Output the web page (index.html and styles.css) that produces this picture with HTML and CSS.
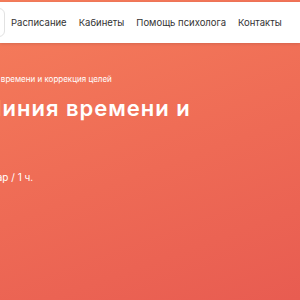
FILE: index.html
```
<!DOCTYPE html>
<html lang="ru">
<head>
    <meta charset="UTF-8">
    <title>Линия времени и коррекция целей</title>
    <link rel="stylesheet" href="styles.css">
</head>
<body class="page">
    <header class="header">
        <div class="header__logo"></div>
        <nav class="header__nav">
            <a href="#">Расписание</a>
            <a href="#">Кабинеты</a>
            <a href="#">Помощь психолога</a>
            <a href="#">Контакты</a>
        </nav>
    </header>
    <section class="hero">
        <div class="hero__crumbs">Линия времени и коррекция целей</div>
        <h1 class="hero__title">Линия времени и</h1>
        <div class="hero__meta">Семинар / 1 ч.</div>
    </section>
</body>
</html>
```
FILE: styles.css
```
html, body {
    margin: 0;
    height: 100%;
}
.page {
    overflow: hidden;
    background: linear-gradient(160deg, #f57d5b 0%, #ee6a55 55%, #e85c51 100%);
    font-family: Inter, "Noto Sans", sans-serif;
}
.header {
    margin-top: 2px;
    height: 41px;
    background: #fff;
    display: flex;
    align-items: center;
    box-shadow: 0 1px 3px rgba(0, 0, 0, 0.12);
}
.header__logo {
    width: 40px;
    height: 27px;
    margin-left: -37px;
    border: 1px solid #e2e2e2;
    border-radius: 6px;
    flex-shrink: 0;
}
.header__nav {
    display: flex;
    gap: 12px;
    margin-left: 6px;
}
.header__nav a {
    color: #333;
    text-decoration: none;
    font-size: 9.5px;
    white-space: nowrap;
}
.hero {
    color: #fff;
    white-space: nowrap;
}
.hero__crumbs {
    margin: 31px 0 0 -26px;
    font-size: 8px;
}
.hero__title {
    margin: 11px 0 0 -15px;
    font-size: 22px;
    font-weight: 600;
    letter-spacing: 1px;
    line-height: 26px;
}
.hero__meta {
    margin: 50px 0 0 -36px;
    font-size: 10px;
}
```
